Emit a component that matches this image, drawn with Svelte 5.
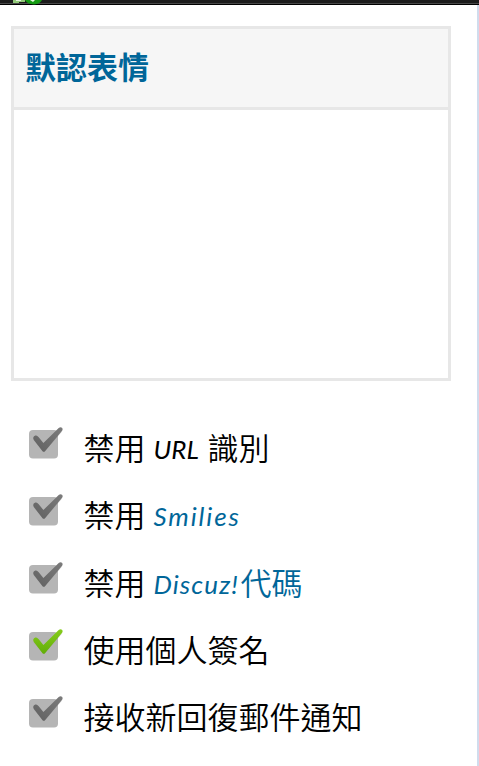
<script lang="ts">
	type Option = {
		prefix: string;
		latin?: string;
		suffix?: string;
		kind?: string;
		link?: boolean;
		checked?: boolean;
	};

	let options: Option[] = $state([
		{ prefix: '禁用', latin: 'URL', suffix: '識別', kind: 'url' },
		{ prefix: '禁用', latin: 'Smilies', kind: 'smilies', link: true },
		{ prefix: '禁用', latin: 'Discuz!', suffix: '代碼', kind: 'discuz', link: true },
		{ prefix: '使用個人簽名', checked: true },
		{ prefix: '接收新回復郵件通知' }
	]);
</script>

<div class="page">
	<div class="topbar">
		<svg width="36" height="5" viewBox="0 0 36 5">
			<path d="M0 0H12V2H6V3H0Z" fill="#91c878" />
			<path d="M3 0H8V1H3Z" fill="#e3f2dc" />
			<path d="M12 0H29Q27 4 21 4.6Q14 4 12 0Z" fill="#159b13" />
			<path d="M17 0H22L20 2Z" fill="#e6f9df" />
		</svg>
	</div>
	<main>
		<section class="smilies-panel">
			<h2>默認表情</h2>
			<div class="smilies-list"></div>
		</section>
		<div class="options">
			{#each options as option}
				<button class="option" onclick={() => (option.checked = !option.checked)}>
					<svg class="check" class:active={option.checked} width="36" height="34" viewBox="0 0 36 34">
						<defs>
							<linearGradient id="grey" x1="0" y1="1" x2="1" y2="0">
								<stop offset="0" stop-color="#606060" />
								<stop offset="1" stop-color="#7c7c7c" />
							</linearGradient>
							<linearGradient id="green" x1="0" y1="1" x2="0" y2="0">
								<stop offset="0" stop-color="#62ae08" />
								<stop offset="1" stop-color="#86cc1c" />
							</linearGradient>
						</defs>
						<rect x="1" y="4" width="29" height="28.5" rx="4" />
						<path class="shadow" d="M7 12.8 16 23.2 32.5 4.5" />
						<path
							class="tick"
							d="M7.3 9.6Q9 9 10.5 11L15.4 16.9 30.7 2.1Q32.2.7 34 1.7 35.2 2.7 34.3 4.4L17 25.2Q15.8 26.5 14.5 25.2L5.7 13.8Q4.2 11 7.3 9.6Z"
						/>
					</svg>
					<span class="label">
						{option.prefix}{#if option.latin}<span class="rest" class:link={option.link}
								><span class="latin {option.kind}">{option.latin}</span>{option.suffix}</span
							>{/if}
					</span>
				</button>
			{/each}
		</div>
	</main>
</div>

<style>
	:global(body) {
		margin: 0;
		background: #fff;
	}
	.page {
		height: 766px;
		overflow: hidden;
		font-family: 'Noto Sans CJK TC', sans-serif;
		color: #000;
	}
	.topbar {
		box-sizing: border-box;
		height: 5px;
		padding-left: 13px;
		background: linear-gradient(#1c1c1c 0 3px, #484848 3px 4px, #000 4px);
	}
	.topbar svg {
		display: block;
	}
	main {
		box-sizing: border-box;
		height: 761px;
		padding: 21px 26px 0 11px;
		border-right: 2px solid #d0dced;
	}
	.smilies-panel {
		box-sizing: border-box;
		width: 440px;
		height: 355px;
		border: 3px solid #e7e7e7;
	}
	h2 {
		box-sizing: border-box;
		height: 81px;
		margin: 0;
		padding-left: 11px;
		border-bottom: 3px solid #e7e7e7;
		background: #f6f6f6;
		color: #069;
		font-size: 31px;
		font-weight: 700;
		line-height: 74px;
	}
	.options {
		padding: 34px 0 0 17px;
	}
	.option {
		display: flex;
		align-items: flex-start;
		height: 67.3px;
		padding: 0;
		border: 0;
		background: none;
		color: inherit;
		font: inherit;
		cursor: pointer;
	}
	.check {
		flex: none;
		margin-top: 11px;
	}
	.check rect {
		fill: #b5b5b5;
	}
	.shadow {
		fill: none;
		stroke: #777;
		stroke-width: 4;
		opacity: 0.25;
	}
	.tick {
		fill: url(#grey);
	}
	.active .tick {
		fill: url(#green);
	}
	.label {
		margin-left: 19.5px;
		font-size: 31px;
		font-weight: 350;
		line-height: 63px;
		white-space: nowrap;
	}
	.link {
		color: #069;
	}
	.latin {
		display: inline-block;
		margin-left: 8px;
		font-family: Lato, sans-serif;
		font-size: 26px;
		font-style: italic;
		font-weight: 400;
		line-height: 1;
		text-align: left;
		vertical-align: 1px;
	}
	.url {
		width: 54px;
	}
	.smilies {
		width: 89px;
		letter-spacing: 1.9px;
	}
	.discuz {
		width: 87px;
		letter-spacing: 1.1px;
	}
</style>
